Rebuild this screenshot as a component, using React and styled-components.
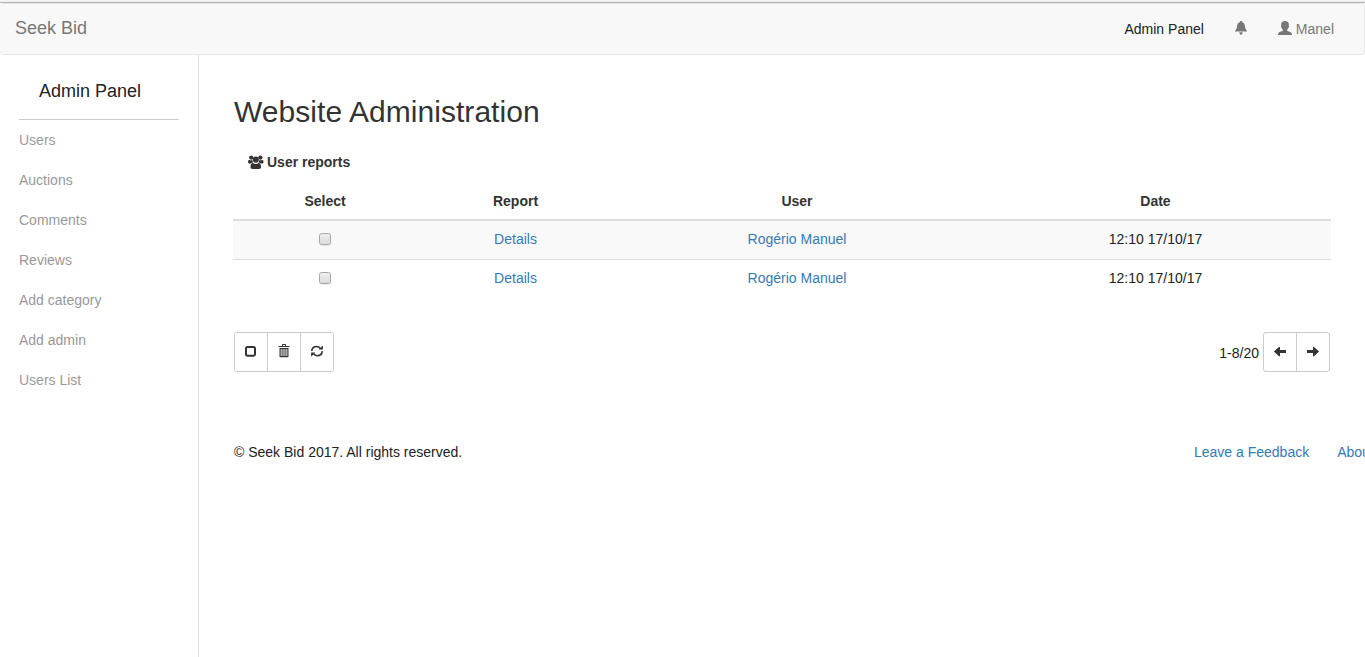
import React from 'react';
import styled, { createGlobalStyle } from 'styled-components';

const Global = createGlobalStyle`
  *, *::before, *::after { box-sizing: border-box; }
  html, body { margin: 0; background: #fff; overflow: hidden; }
  body {
    font-family: "Helvetica Neue", Helvetica, "Liberation Sans", Arial, sans-serif;
    font-size: 14px;
    line-height: 20px;
    color: #333;
  }
  a { color: #337ab7; text-decoration: none; }
`;

const Page = styled.div`
  display: flex;
  flex-direction: column;
  height: 657px;
  overflow: hidden;
`;

const TopEdge = styled.div`
  flex: none;
  height: 3px;
  background: #f2f1f0;
  border-bottom: 1px solid #b4b2b0;
`;

const Navbar = styled.nav`
  flex: none;
  display: flex;
  align-items: center;
  justify-content: space-between;
  height: 52px;
  padding: 0 30px 0 15px;
  background: #f8f8f8;
  border: 1px solid #e7e7e7;
  border-left: 0;
  border-radius: 4px;
`;

const Brand = styled.a`
  padding-bottom: 2px;
  font-size: 18px;
  && { color: #777; }
`;

const NavLinks = styled.div`
  display: flex;
  align-items: center;
  gap: 30px;
`;

const NavLink = styled.a`
  display: flex;
  align-items: center;
  gap: 4px;
  && { color: ${(p) => (p.$active ? '#222' : '#777')}; }
  svg { margin-bottom: 2px; }
`;

const Icon = styled.svg`
  display: block;
  flex: none;
  fill: currentColor;
`;

const Body = styled.div`
  flex: 1;
  display: flex;
`;

const Sidebar = styled.aside`
  flex: none;
  width: 199px;
  padding: 16px 19px 0;
  border-right: 1px solid #ddd;
`;

const SidebarTitle = styled.div`
  height: 49px;
  padding: 0 20px;
  font-size: 18px;
  line-height: 40px;
  color: #222;
  border-bottom: 1px solid #ccc;
`;

const SidebarLink = styled.a`
  display: block;
  line-height: 40px;
  && { color: #999; }
`;

const Main = styled.main`
  flex: none;
  width: 1166px;
  padding: 40px 0 0 34px;
`;

const Heading = styled.h2`
  margin: 0 0 24px 1px;
  font-size: 30px;
  font-weight: 400;
  line-height: 33px;
  letter-spacing: 0.05px;
`;

const Caption = styled.div`
  display: flex;
  align-items: center;
  gap: 3px;
  height: 20px;
  margin: 0 0 11px 15px;
  font-weight: 700;
`;

const Table = styled.table`
  width: 1098px;
  table-layout: fixed;
  border-collapse: separate;
  border-spacing: 0;
  text-align: center;
`;

const Th = styled.th`
  width: ${(p) => p.$width}px;
  height: 38px;
  padding: 0;
  border-bottom: 2px solid #ddd;
`;

const Row = styled.tr`
  background: ${(p) => (p.$striped ? '#f9f9f9' : '#fff')};
`;

const Td = styled.td`
  height: ${(p) => (p.$striped ? 39 : 38)}px;
  padding: 0 0 2px;
  color: #222;
  border-bottom: ${(p) => (p.$striped ? '1px solid #ddd' : '0')};
`;

const Checkbox = styled.input.attrs({ type: 'checkbox' })`
  display: block;
  appearance: none;
  width: 12px;
  height: 12px;
  margin: 0 auto 1px;
  border: 1px solid #a6a6a6;
  border-radius: 2.5px;
  background: linear-gradient(#eee, #dcdcdc);
  box-shadow: 0 1px 1px rgba(0, 0, 0, 0.08);
`;

const Toolbar = styled.div`
  display: flex;
  align-items: center;
  justify-content: space-between;
  width: 1096px;
  margin: 34px 0 0 1px;
`;

const Group = styled.div`
  display: flex;
  align-items: center;
`;

const Button = styled.button`
  display: flex;
  align-items: center;
  justify-content: center;
  width: 34px;
  height: 40px;
  padding: 0 0 2px;
  color: #333;
  background: #fff;
  border: 1px solid #ccc;
  border-radius: ${(p) => (p.$edge === 'left' ? '3px 0 0 3px' : p.$edge === 'right' ? '0 3px 3px 0' : '0')};
  & + & { margin-left: -1px; }
`;

const Count = styled.span`
  margin-right: 4px;
  padding-top: 2px;
  color: #222;
`;

const Footer = styled.footer`
  display: flex;
  justify-content: space-between;
  margin: 70px 0 0 1px;
  color: #222;
`;

const FooterLinks = styled.div`
  display: flex;
  flex: none;
  gap: 28px;
  width: 171px;
  white-space: nowrap;
`;

const BellIcon = () => (
  <Icon width="14" height="14" viewBox="0 0 14 14">
    <path transform="translate(.5 0)" d="M6.500 0c.8 0 1.200.5 1.200 1.200 1.700.5 2.500 1.800 2.700 3.600.2 2 .5 3.200 1.500 4.200.4.400.7.900.7 1.500H.4c0-.6.3-1.100.7-1.500 1-1 1.300-2.200 1.500-4.200.2-1.800 1-3.100 2.700-3.600C5.300.5 5.700 0 6.500 0zM4.900 11.300h3.200c0 1.200-.6 2.400-1.600 2.400s-1.600-1.200-1.600-2.400z" />
  </Icon>
);

const UserIcon = () => (
  <Icon width="14" height="14" viewBox="0 0 14 14">
    <path d="M7 0c2.300 0 3.900 1.400 3.900 3.500 0 .6-.1 1-.1 1.300.4.300.3 1.500-.4 2-.2.800-.6 1.500-1.200 2v1c.8.500 2.900 1 3.900 1.600.7.500.9 1.100.9 2.600H0c0-1.500.2-2.100.9-2.600 1-.6 3.100-1.100 3.900-1.600v-1c-.6-.5-1-1.200-1.200-2-.7-.5-.8-1.700-.4-2 0-.3-.1-.7-.1-1.300C3.100 1.400 4.700 0 7 0z" />
  </Icon>
);

const UsersIcon = () => (
  <Icon width="16" height="15" viewBox="0 0 16 15">
    <circle cx="3.200" cy="2.600" r="2.100" />
    <circle cx="12.400" cy="2.600" r="2.100" />
    <circle cx="7.800" cy="4.600" r="3.100" />
    <path d="M1.100 4.700c1.200.7 2.400.7 3.200.4.100 1 .4 1.700.9 2.300-.9 0-1.700.4-2.300 1.100H1.500C.6 8.500.1 8 .1 7.200c0-1.200.2-2.300 1-2.500zM14.500 4.700c-1.200.7-2.400.7-3.200.4-.1 1-.4 1.700-.9 2.300.9 0 1.700.4 2.300 1.100h1.400c.9 0 1.400-.5 1.400-1.300 0-1.200-.2-2.300-1-2.500z" />
    <path d="M5 8c1.800 1.400 3.800 1.400 5.600 0 1.800 0 2.500 1.700 2.500 4 0 1.200-.8 1.900-2 1.900H4.500c-1.200 0-2-.7-2-1.900 0-2.300.7-4 2.500-4z" />
  </Icon>
);

const SquareIcon = () => (
  <Icon width="14" height="12" viewBox="0 0 14 12">
    <rect x="2" y="1.900" width="9" height="8.900" rx="1.700" fill="none" stroke="currentColor" strokeWidth="2" />
  </Icon>
);

const TrashIcon = () => (
  <Icon width="12" height="14" viewBox="0 0 12 14">
    <path d="M4 1.100C4 .4 4.400 0 5 0h2c.6 0 1 .4 1 1.100V2h3.500v1H.5V2H4zM5 1v1h2V1z" fillRule="evenodd" />
    <path d="M1.500 4h9v8c0 .8-.4 1.200-1.100 1.200H2.600c-.7 0-1.100-.4-1.100-1.200zM2.700 5v7h.9V5zm1.900 0v7h.9V5zm1.900 0v7h.9V5zm1.900 0v7h.9V5z" fillRule="evenodd" />
  </Icon>
);

const RefreshIcon = () => (
  <Icon width="14" height="14" viewBox="0 0 14 14">
    <path d="M1.700 7c.3-2.700 2.300-4.500 4.900-4.500 1.700 0 2.900.7 3.800 1.900M12.300 7.200c-.3 2.700-2.300 4.500-4.900 4.500-1.700 0-2.900-.7-3.800-1.900" fill="none" stroke="currentColor" strokeWidth="1.600" />
    <path d="M12.900 1.400v4.200H8.700zM1.100 12.800V8.600h4.200z" />
  </Icon>
);

const ArrowIcon = ({ right }) => (
  <Icon width="14" height="12" viewBox="0 0 14 12">
    <path transform={right ? 'translate(14 0) scale(-1 1)' : undefined} d="M.9 6.600 6 2h1v3h6v3H7v3.200H6z" />
  </Icon>
);

const menu = ['Users', 'Auctions', 'Comments', 'Reviews', 'Add category', 'Add admin', 'Users List'];

const columns = [
  ['Select', 184],
  ['Report', 197],
  ['User', 366],
  ['Date', 351],
];

const reports = [
  { id: 1, user: 'Rogério Manuel', date: '12:10 17/10/17' },
  { id: 2, user: 'Rogério Manuel', date: '12:10 17/10/17' },
];

export default function App() {
  return (
    <Page>
      <Global />
      <TopEdge />
      <Navbar>
        <Brand href="#">Seek Bid</Brand>
        <NavLinks>
          <NavLink href="#" $active>Admin Panel</NavLink>
          <NavLink href="#" aria-label="Notifications"><BellIcon /></NavLink>
          <NavLink href="#"><UserIcon />Manel</NavLink>
        </NavLinks>
      </Navbar>
      <Body>
        <Sidebar>
          <SidebarTitle>Admin Panel</SidebarTitle>
          {menu.map((item) => (
            <SidebarLink href="#" key={item}>{item}</SidebarLink>
          ))}
        </Sidebar>
        <Main>
          <Heading>Website Administration</Heading>
          <Caption><UsersIcon />User reports</Caption>
          <Table>
            <thead>
              <tr>
                {columns.map(([label, width]) => (
                  <Th key={label} $width={width}>{label}</Th>
                ))}
              </tr>
            </thead>
            <tbody>
              {reports.map((r, i) => {
                const striped = i % 2 === 0;
                return (
                  <Row key={r.id} $striped={striped}>
                    <Td $striped={striped}><Checkbox aria-label="Select report" /></Td>
                    <Td $striped={striped}><a href="#">Details</a></Td>
                    <Td $striped={striped}><a href="#">{r.user}</a></Td>
                    <Td $striped={striped}>{r.date}</Td>
                  </Row>
                );
              })}
            </tbody>
          </Table>
          <Toolbar>
            <Group>
              <Button $edge="left" aria-label="Select all"><SquareIcon /></Button>
              <Button aria-label="Delete"><TrashIcon /></Button>
              <Button $edge="right" aria-label="Refresh"><RefreshIcon /></Button>
            </Group>
            <Group>
              <Count>1-8/20</Count>
              <Button $edge="left" aria-label="Previous"><ArrowIcon /></Button>
              <Button $edge="right" aria-label="Next"><ArrowIcon right /></Button>
            </Group>
          </Toolbar>
          <Footer>
            <span>© Seek Bid 2017. All rights reserved.</span>
            <FooterLinks>
              <a href="#">Leave a Feedback</a>
              <a href="#">About</a>
            </FooterLinks>
          </Footer>
        </Main>
      </Body>
    </Page>
  );
}
